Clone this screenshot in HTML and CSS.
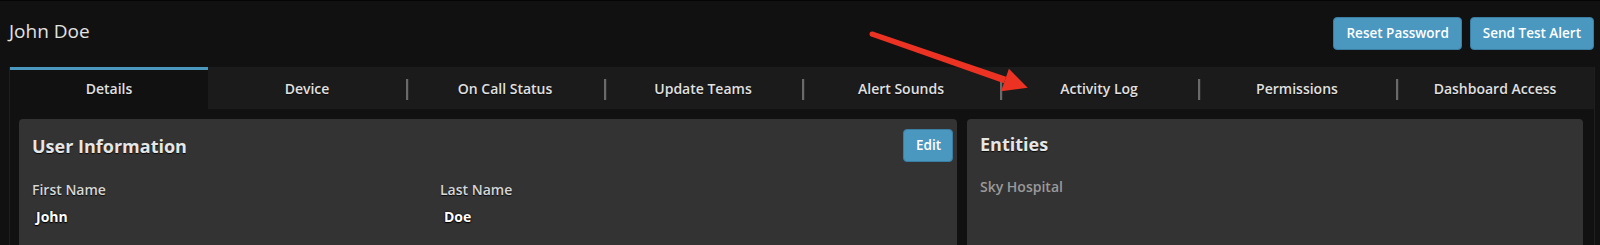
FILE: index.html
```html
<!DOCTYPE html>
<html>
<head>
<meta charset="utf-8">
<title>John Doe</title>
<link rel="stylesheet" href="styles.css">
</head>
<body>
<div class="page">
  <header class="top">
    <h1 class="title">John Doe</h1>
    <div class="actions">
      <button class="btn">Reset Password</button>
      <button class="btn">Send Test Alert</button>
    </div>
  </header>
  <section class="frame">
    <nav class="tabs">
      <div class="tab active">Details</div>
      <div class="tab">Device</div>
      <div class="tab sep">On Call Status</div>
      <div class="tab sep">Update Teams</div>
      <div class="tab sep">Alert Sounds</div>
      <div class="tab sep">Activity Log</div>
      <div class="tab sep">Permissions</div>
      <div class="tab sep">Dashboard Access</div>
    </nav>
    <div class="content">
      <div class="panel panel-user">
        <div class="panel-head">
          <h2 class="panel-title">User Information</h2>
          <button class="btn btn-edit">Edit</button>
        </div>
        <div class="fields">
          <div class="field">
            <div class="label">First Name</div>
            <div class="value">John</div>
          </div>
          <div class="field">
            <div class="label">Last Name</div>
            <div class="value">Doe</div>
          </div>
        </div>
      </div>
      <div class="panel panel-entities">
        <h2 class="panel-title">Entities</h2>
        <div class="entity">Sky Hospital</div>
      </div>
    </div>
  </section>
</div>
<svg class="arrow" width="1600" height="245" viewBox="0 0 1600 245" xmlns="http://www.w3.org/2000/svg">
  <polygon points="872.8,31.6 1006.1,76.7 1003.9,83.3 871.2,36.4" fill="#ec3323"/>
  <circle cx="872" cy="34" r="2.5" fill="#ec3323"/>
  <polygon points="1008.9,68.7 1027.7,87.8 1001.1,91.3" fill="#ec3323"/>
</svg>
</body>
</html>
```

FILE: styles.css
```css
* { box-sizing: border-box; }

html, body {
  margin: 0;
  padding: 0;
  background: #111111;
  height: 245px;
  overflow: hidden;
}

body {
  font-family: "Open Sans", "DejaVu Sans", sans-serif;
  color: #dddddd;
  position: relative;
}

.page {
  border-top: 1px solid #050505;
}

.top {
  display: flex;
  justify-content: space-between;
  align-items: flex-start;
  height: 66px;
  padding: 16px 6px 0 9px;
}

.title {
  margin: 0;
  font-size: 19px;
  font-weight: 400;
  line-height: 28px;
  color: #e2e2e2;
}

.actions {
  display: flex;
  gap: 8px;
}

.btn {
  font-family: "Open Sans", "DejaVu Sans", sans-serif;
  font-size: 13.5px;
  font-weight: 600;
  color: #ffffff;
  background: #4a97c0;
  border: 1px solid #3b7ea4;
  border-radius: 4px;
  height: 33px;
  padding: 0 12px;
  line-height: 31px;
  cursor: pointer;
}

.frame {
  margin: 0 5px 0 9px;
  border-left: 1px solid #1f1f1f;
  border-right: 1px solid #1f1f1f;
  height: 200px;
}

.tabs {
  display: flex;
  height: 42px;
  background: #1b1b1b;
}

.tab {
  flex: 1 1 0;
  position: relative;
  text-align: center;
  font-size: 14px;
  font-weight: 600;
  line-height: 44px;
  color: #e0e0e0;
  text-shadow: 0 1px 1px rgba(0, 0, 0, 0.7);
}

.tab.active {
  background: #111111;
  border-top: 3px solid #4a97c0;
  line-height: 38px;
}

.tab.sep::before {
  content: "";
  position: absolute;
  left: 0;
  top: 12px;
  width: 2px;
  height: 21px;
  background: #6a6a6a;
  box-shadow: 1px 0 0 #2c2c2c;
}

.content {
  display: grid;
  grid-template-columns: 938px 616px;
  gap: 10px;
  padding: 10px 11px 0 9px;
}

.panel {
  background: #333333;
  border-radius: 4px;
  height: 146px;
}

.panel-user {
  padding: 10px 4px 0 13px;
}

.panel-head {
  display: flex;
  justify-content: space-between;
  align-items: flex-start;
}

.panel-title {
  margin: 0;
  font-size: 18px;
  font-weight: 700;
  line-height: 26px;
  color: #e6e6e6;
  text-shadow: 0 1px 1px rgba(0, 0, 0, 0.8);
}

.panel-user .panel-title {
  padding-top: 4px;
}

.btn-edit {
  padding: 0 12px;
  width: 50px;
  text-align: center;
}

.fields {
  display: grid;
  grid-template-columns: 408px 1fr;
  margin-top: 18px;
}

.label {
  font-size: 14px;
  font-weight: 600;
  line-height: 20px;
  color: #d6d6d6;
  text-shadow: 0 1px 1px rgba(0, 0, 0, 0.8);
}

.value {
  margin-top: 7px;
  padding-left: 4px;
  font-size: 14px;
  font-weight: 700;
  line-height: 20px;
  color: #ffffff;
  text-shadow: 0 0 2px #000, 0 1px 1px #000;
}

.panel-entities {
  padding: 12px 13px 0 13px;
}

.entity {
  margin-top: 20px;
  font-size: 14px;
  font-weight: 600;
  line-height: 20px;
  color: #9a9a9a;
}

.arrow {
  position: absolute;
  top: 0;
  left: 0;
  pointer-events: none;
}
```
